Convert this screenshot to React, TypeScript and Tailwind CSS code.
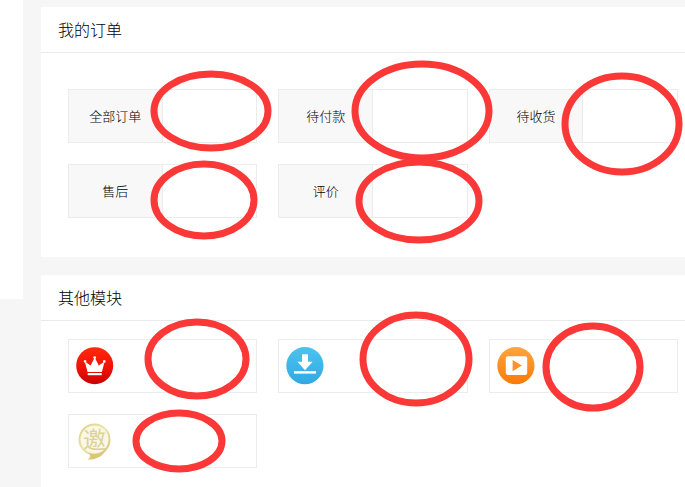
import React from 'react';

const orders = ['全部订单', '待付款', '待收货', '售后', '评价'];

const marks = [
  { cx: 211, cy: 111, rx: 57, ry: 37 },
  { cx: 422, cy: 111, rx: 67, ry: 47 },
  { cx: 622, cy: 124, rx: 57, ry: 48 },
  { cx: 204, cy: 200, rx: 50, ry: 36 },
  { cx: 419, cy: 201, rx: 60, ry: 39 },
  { cx: 197, cy: 359, rx: 49, ry: 37 },
  { cx: 416, cy: 359, rx: 53, ry: 44 },
  { cx: 593, cy: 367, rx: 47, ry: 41 },
  { cx: 179, cy: 441, rx: 43, ry: 28 },
];

function CrownIcon() {
  return (
    <svg viewBox="0 0 38 38" className="size-[38px]" aria-hidden="true">
      <defs>
        <linearGradient id="crown" x1="0" y1="0" x2="0" y2="1">
          <stop offset="0" stopColor="#ff2a0a" />
          <stop offset="0.5" stopColor="#f51205" />
          <stop offset="1" stopColor="#c80404" />
        </linearGradient>
      </defs>
      <circle cx="18.7" cy="18.7" r="18.5" fill="url(#crown)" />
      <path
        d="M8.8 14.4 L14.6 18.4 L18.7 10.6 L22.8 18.4 L28.6 14.4 L25.9 25 H11.5 Z"
        fill="#fff"
      />
      <circle cx="9.1" cy="14.4" r="1.3" fill="#fff" />
      <circle cx="18.7" cy="10.6" r="1.4" fill="#fff" />
      <circle cx="28.3" cy="14.4" r="1.3" fill="#fff" />
      <rect x="11.7" y="26" width="14" height="2.2" fill="#fff" />
    </svg>
  );
}

function DownloadIcon() {
  return (
    <svg viewBox="0 0 38 38" className="size-[38px]" aria-hidden="true">
      <defs>
        <linearGradient id="download" x1="0" y1="0" x2="0" y2="1">
          <stop offset="0" stopColor="#4cc3ee" />
          <stop offset="1" stopColor="#30a9e2" />
        </linearGradient>
      </defs>
      <circle cx="18.9" cy="18.7" r="18.6" fill="url(#download)" />
      <path d="M16 7.3 H22 V14.8 H26.6 L19 23.2 L11.4 14.8 H16 Z" fill="#fff" />
      <rect x="8" y="24.2" width="22" height="2.4" fill="#fff" />
    </svg>
  );
}

function VideoIcon() {
  return (
    <svg viewBox="0 0 38 38" className="size-[38px]" aria-hidden="true">
      <defs>
        <linearGradient id="video" x1="0" y1="0" x2="0" y2="1">
          <stop offset="0" stopColor="#ffa540" />
          <stop offset="1" stopColor="#fb7a06" />
        </linearGradient>
      </defs>
      <circle cx="18.9" cy="18.7" r="18.6" fill="url(#video)" />
      <rect x="8.8" y="9.3" width="21.4" height="18.6" rx="1.8" fill="#fff" />
      <path d="M15.6 13 L24.8 18.6 L15.6 24.2 Z" fill="#fd922a" />
    </svg>
  );
}

function InviteIcon() {
  return (
    <svg viewBox="0 0 38 38" className="size-[38px]" aria-hidden="true">
      <defs>
        <linearGradient id="invite" x1="0" y1="0" x2="1" y2="1">
          <stop offset="0" stopColor="#ddd184" />
          <stop offset="0.5" stopColor="#ebe2ac" />
          <stop offset="1" stopColor="#d6c46c" />
        </linearGradient>
      </defs>
      <circle cx="18.5" cy="17.5" r="15" fill="#faf7e6" stroke="url(#invite)" strokeWidth="2" />
      <path
        d="M13 31 C17 33.2 24 32.5 31 27 C26.5 34.5 20 38 11.5 37.5 C14.5 35.8 15 33.6 13 31 Z"
        fill="#d9c873"
      />
      <text
        x="18.5"
        y="25.5"
        textAnchor="middle"
        fontSize="23"
        fontWeight="400"
        fontFamily="'Noto Sans CJK SC', sans-serif"
        fill="#ddd292"
      >
        邀
      </text>
    </svg>
  );
}

const modules = [
  { id: 'vip', label: '会员', Icon: CrownIcon },
  { id: 'download', label: '下载', Icon: DownloadIcon },
  { id: 'video', label: '视频', Icon: VideoIcon },
  { id: 'invite', label: '邀请', Icon: InviteIcon },
];

function PanelTitle({ children }: { children: React.ReactNode }) {
  return (
    <h2 className="h-[46px] border-b border-[#e9e9e9] pl-[17px] text-base leading-[44px] font-light text-black">
      {children}
    </h2>
  );
}

function App() {
  return (
    <div className="relative flex min-h-screen items-stretch gap-[18px] overflow-hidden bg-[#f6f6f6] font-['Noto_Sans_CJK_SC',sans-serif]">
      {/* Side column */}
      <aside className="h-[299px] w-[23px] shrink-0 bg-white" />

      <main className="flex min-w-0 flex-1 flex-col gap-[18px] pt-[7px]">
        {/* Orders */}
        <section className="bg-white">
          <PanelTitle>我的订单</PanelTitle>
          <div className="grid grid-cols-3 gap-[21px] pt-9 pr-[7px] pb-[39px] pl-[27px]">
            {orders.map((label) => (
              <div key={label} className="grid h-[54px] grid-cols-2 border border-[#ececec]">
                <div className="flex items-center justify-center border-r border-[#ececec] bg-[#f8f8f8] text-[13px] leading-5 font-light text-black">
                  {label}
                </div>
                <div />
              </div>
            ))}
          </div>
        </section>

        {/* Other modules */}
        <section className="flex-1 bg-white">
          <PanelTitle>其他模块</PanelTitle>
          <div className="grid grid-cols-3 gap-[21px] pt-[18px] pr-[7px] pb-[18px] pl-[27px]">
            {modules.map(({ id, label, Icon }) => (
              <a
                key={id}
                href={`#${id}`}
                aria-label={label}
                className="flex h-[54px] items-center border border-[#ececec] pl-[7px]"
              >
                <Icon />
              </a>
            ))}
          </div>
        </section>
      </main>

      {/* Hand-drawn marks over the panels */}
      <svg className="pointer-events-none absolute inset-0 size-full" aria-hidden="true">
        {marks.map((mark) => (
          <ellipse key={`${mark.cx}-${mark.cy}`} {...mark} fill="none" stroke="#fa3837" strokeWidth="7" />
        ))}
      </svg>
    </div>
  );
}

export default App;
